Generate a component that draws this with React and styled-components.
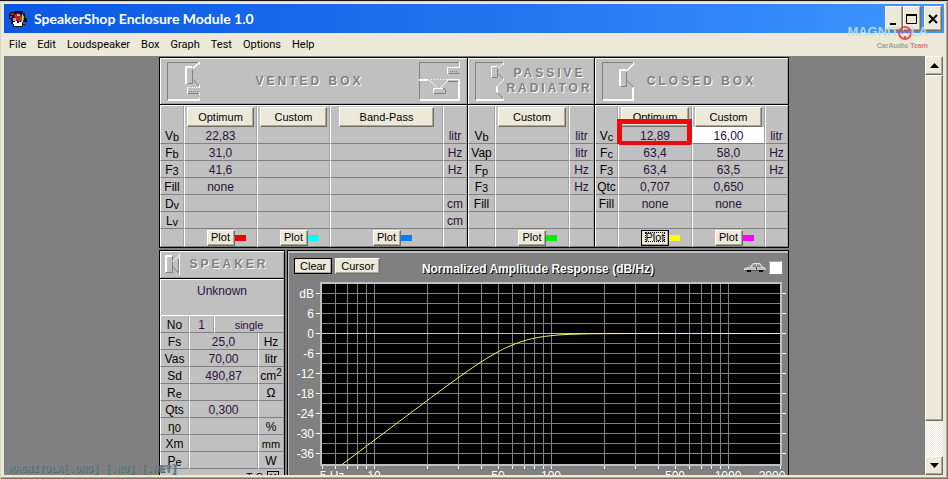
import React from "react";
import styled, { createGlobalStyle, css } from "styled-components";

const SANS = '"Liberation Sans", Arial, sans-serif';
const FACE = "#ece9d8";
const SILVER = "#c0c0c0";
const GRAY = "#808080";

const GlobalStyle = createGlobalStyle`
  *, *::before, *::after { box-sizing: border-box; }
  body { margin: 0; background: #1d1612; font: 12px/16px ${SANS}; color: #000; overflow: hidden; }
  button, input { font: inherit; color: inherit; margin: 0; padding: 0; border-radius: 0; }
`;

const raised = css`
  background: ${FACE};
  border: 1px solid;
  border-color: #fff #716f64 #716f64 #fff;
  box-shadow: inset -1px -1px 0 #aca899;
`;

/* ---------- window frame ---------- */

const Frame = styled.div`
  position: relative;
  display: flex;
  flex-direction: column;
  height: 100vh;
  padding: 3px 4px 4px;
  border-top: 1px solid #1d1612;
  background: ${FACE};
  box-shadow: inset 1px 1px 0 #d8d4c4, inset -1px -1px 0 #77735f, inset -2px -2px 0 #aca899;
`;

const TitleBar = styled.header`
  display: flex;
  align-items: center;
  flex: none;
  height: 29px;
  padding: 0 2px 0 5px;
  background: linear-gradient(90deg, #0b57e3, #2273ef 50%, #3f96ff);
`;

const TitleText = styled.h1`
  flex: 1;
  margin: 0 0 0 7px;
  font: bold 14px/20px Lato, "Open Sans", sans-serif;
  color: #fff;
`;

const WindowButton = styled.button`
  ${raised}
  display: flex;
  align-items: center;
  justify-content: center;
  width: 18px;
  height: 25px;
  margin-left: ${(p) => (p.$apart ? 3 : 0)}px;
`;

const MenuBar = styled.nav`
  display: flex;
  flex: none;
  gap: 11px;
  height: 23px;
  padding: 0 5px;
`;

const MenuItem = styled.button`
  border: 0;
  background: none;
  font: 11px/22px Roboto, "Noto Sans", sans-serif;
`;

const Body = styled.div`
  display: flex;
  flex: 1;
  min-height: 0;
  padding-right: 1px;
`;

const Workspace = styled.main`
  flex: 1;
  min-width: 0;
  overflow: hidden;
  padding: 1px 136px 0 155px;
  background: ${GRAY};
`;

/* ---------- scroll bar ---------- */

const Scroll = styled.div`
  display: flex;
  flex-direction: column;
  width: 18px;
  background: repeating-conic-gradient(#fff 0 25%, ${FACE} 0 50%) 0 0 / 2px 2px;
`;

const ScrollButton = styled.button`
  ${raised}
  display: flex;
  align-items: center;
  justify-content: center;
  height: 19px;
`;

const Thumb = styled.div`
  ${raised}
  flex: 346;
`;

const TrackRest = styled.div`
  flex: 35;
`;

/* ---------- panels ---------- */

const BoxRow = styled.div`
  display: grid;
  grid-template-columns: minmax(0, 308fr) minmax(0, 127fr) minmax(0, 194fr);
  border: 1px solid #000;
  border-right: 0;
`;

const LowerRow = styled.div`
  display: grid;
  grid-template-columns: minmax(0, 126fr) minmax(0, 502fr);
  gap: 2px;
  margin-top: 2px;
`;

const Panel = styled.section`
  background: ${SILVER};
  border: ${(p) => (p.$framed ? "1px solid #000" : "0")};
  border-right: 1px solid #000;
`;

const PanelHead = styled.div`
  display: flex;
  align-items: center;
  height: ${(p) => (p.$short ? 28 : 47)}px;
  padding: 0 ${(p) => p.$end ?? 7}px 0 ${(p) => (p.$short ? 5 : 7)}px;
  border-bottom: 1px solid #000;
  box-shadow: inset 1px 1px 0 #fff, inset -1px -1px 0 #a0a0a0;
  svg { flex: none; }
`;

const PanelTitle = styled.h2`
  flex: 1;
  margin: 0;
  text-align: center;
  font: bold 12px/15px ${SANS};
  letter-spacing: 3px;
  color: ${GRAY};
  text-shadow: 1px 1px 0 #fff;
`;

const Grid = styled.table`
  width: 100%;
  table-layout: fixed;
  border-collapse: separate;
  border-spacing: 0;
`;

const Cell = styled.td`
  position: relative;
  height: 17px;
  padding: 2px 0 0;
  border-left: 1px solid #fff;
  border-right: 1px solid #a4a4a4;
  border-bottom: 1px solid ${GRAY};
  font-size: ${(p) => (p.$small ? 11 : 12)}px;
  font-weight: normal;
  line-height: 14px;
  text-align: center;
  white-space: nowrap;
  color: ${(p) => (p.$value ? "#2a1238" : "#000")};
  sub, sup { font-size: 11px; line-height: 0; }
  sub { vertical-align: -1px; }
  sup { font-size: 10px; vertical-align: 4px; }
`;

const TopCell = styled(Cell)`
  height: 22px;
  padding: 1px 2px 0 2px;
  border-top: 1px solid #fff;
  border-bottom: 0;
`;

const FieldCell = styled(Cell)`
  padding: 0;
`;

const PlotCell = styled(Cell)`
  height: 18px;
  padding: 0;
`;

const ModeButton = styled.button`
  ${raised}
  display: block;
  width: ${(p) => (p.$wide ? "88%" : "100%")};
  height: 20px;
  margin: 0 auto;
  font-size: 11px;
  line-height: 16px;
`;

const PlotLine = styled.div`
  display: grid;
  grid-template-columns: 1fr 28px 1fr;
  align-items: center;
`;

const PlotButton = styled.button`
  ${raised}
  grid-column: 2;
  height: 16px;
  font-size: 11px;
  line-height: 13px;
  ${(p) => p.$focused && css`
    border-color: #000;
    span { outline: 1px dotted #000; outline-offset: -2px; padding: 0 2px; }
  `}
`;

const Swatch = styled.i`
  width: 11px;
  height: 6px;
  margin-top: 1px;
  background: ${(p) => p.$color};
`;

const ValueInput = styled.input`
  display: block;
  width: 100%;
  height: 16px;
  padding-top: 2px;
  border: 0;
  background: #fff;
  text-align: center;
`;

const RedMark = styled.span`
  position: absolute;
  inset: -8px -1px -2px -2px;
  border: 5px solid #ee0a0c;
  border-bottom-width: 4px;
  pointer-events: none;
`;

const SpeakerName = styled.p`
  height: 37px;
  margin: 0;
  padding: 3px 0;
  border: 1px solid;
  border-color: #fff #a4a4a4 #fff #fff;
  text-align: center;
  color: #2a1238;
`;

const ModelRow = styled.label`
  display: flex;
  align-items: center;
  justify-content: flex-end;
  gap: 4px;
  height: 16px;
  padding-right: 5px;
  font-size: 11px;
`;

const ModelButton = styled.button`
  width: 12px;
  height: 12px;
  border: 1px solid #000;
  background: ${SILVER};
  font: bold 9px/9px ${SANS};
`;

/* ---------- graph ---------- */

const GraphPanel = styled.section`
  border: 1px solid #000;
  background: ${GRAY};
  box-shadow: inset 1px 2px 0 ${SILVER};
`;

const GraphHead = styled.div`
  display: grid;
  grid-template-columns: 1fr auto 1fr;
  align-items: start;
  padding: 7px 6px 1px;
`;

const GraphTools = styled.div`
  display: flex;
  gap: 3px;
  justify-content: ${(p) => (p.$end ? "flex-end" : "flex-start")};
  align-self: ${(p) => (p.$end ? "center" : "start")};
  align-items: center;
`;

const ToolButton = styled.button`
  ${raised}
  height: 16px;
  padding: 0 5px;
  font-size: 11px;
  line-height: 13px;
  ${(p) => p.$default && css`border-color: #000;`}
`;

const GraphTitle = styled.h2`
  margin: 0;
  padding-top: 3px;
  font: bold 12px/16px ${SANS};
  color: #fff;
  text-shadow: 1px 1px 0 #000;
`;

const CabinCheck = styled.input`
  appearance: none;
  width: 13px;
  height: 13px;
  border: 1px solid;
  border-color: #aca899 #fff #fff #aca899;
  background: #fff;
`;

const Chart = styled.svg`
  display: block;
  width: 100%;
  font: 12px ${SANS};
`;

/* ---------- watermarks ---------- */

const SiteMark = styled.div`
  position: absolute;
  left: 9px;
  bottom: 2px;
  font: bold 10px/14px "Liberation Mono", monospace;
  color: #72878e;
  text-shadow: 1px 1px 0 #59666b;
  pointer-events: none;
`;

const LogoMark = styled.div`
  position: absolute;
  top: 20px;
  right: 20px;
  text-align: right;
  pointer-events: none;
`;

const LogoWord = styled.div`
  display: flex;
  align-items: center;
  height: 21px;
  font: bold 13px/21px ${SANS};
  color: rgba(190, 224, 222, 0.9);
  svg { margin: 4px -2px 0 -2px; }
`;

const LogoTeam = styled.div`
  font: bold 7px/8px ${SANS};
  color: #a09f98;
  b { color: #e8737a; }
`;

/* ---------- drawings ---------- */

const Strokes = ({ w, h, dark, light }) => (
  <svg width={w} height={h} viewBox={`0 0 ${w} ${h}`} fill="none" aria-hidden="true">
    <path d={dark} stroke={GRAY} />
    <path d={light} stroke="#fff" />
  </svg>
);

const VentedIcon = () => (
  <Strokes
    w={33}
    h={41}
    dark="M.5 39V1.5H32M25.5 7V22.5H20M26 18.5L32 25M21 32.5H32M22 30.5H23M24 30.5H25M26 30.5H27M28 30.5H29M30 30.5H31"
    light="M1 39.5H32.5V37M1 38.5H32.5M19.5 23V6.5H26M18.5 23V5.5H25M25.5 8.5L32.5 1.5M26 7L32 1M32.5 1V4M20.5 33V26.5H22M23 26.5H24M25 26.5H26M27 26.5H28M29 26.5H30M31 26.5H32M32.5 24V27M32.5 32V34"
  />
);

const BandPassIcon = () => (
  <Strokes
    w={41}
    h={41}
    dark="M.5 38V1.5H40M10.5 19.5L18.5 27.5M29 20.5H40M15 32.5H26.5V28M20 27.5H26M30 12.5H40M31 10.5H32M33 10.5H34M35 10.5H36M37 10.5H38"
    light="M0 18.5H9.5L18.5 27M0 19.5H9M29.5 18.5L21.5 27M28.5 18.5H40.5V39.5H1M39.5 20V38.5H1M14.5 32V27.5H24M40 6.5H28.5V13M40.5 1V7M12 18.5H13M15 18.5H16M18 18.5H19M21 18.5H22M24 18.5H25M27 18.5H28"
  />
);

const PassiveIcon = () => (
  <Strokes
    w={30}
    h={41}
    dark="M.5 39V1.5H28M22.5 5V16.5H17M23 12.5L28.5 18M22.5 25V32L28.5 38"
    light="M1 39.5H28.5V37M1 38.5H28.5M16.5 16V5.5H23M22.5 8L28.5 2M28.5 1V4M28.5 17V19L22.5 25V32M21.5 25.5V31M28.5 37V39"
  />
);

const ClosedIcon = () => (
  <Strokes
    w={33}
    h={41}
    dark="M.5 39V1.5H31M24.5 10V25.5H19M25 19.5L31.5 26"
    light="M1 39.5H31.5V26M1 38.5H31.5M30.5 27V39M18.5 25V9.5H25M17.5 25V8.5H24M24.5 10.5L31.5 3.5M24.5 9.5L30.5 3.5M31.5 1V5"
  />
);

const SpeakerIcon = () => (
  <Strokes
    w={16}
    h={22}
    dark="M7.5 2V18.5H1M8 13L14.5 20M13.5 5V18"
    light="M.5 18V1.5H7M1.5 18V2.5H7M7.5 8L14.5 1M14.5 0V21"
  />
);

const AppIcon = () => (
  <svg width="18" height="18" viewBox="0 0 18 18" aria-hidden="true">
    <path d="M1 2h5V1h8v2h2v5h2v4h-2v3h-2v2H4v-3H2V9H0V4h1z" fill="#10101c" />
    <path d="M2 3h3v2H2zM5 5l4-2 3 2 1 5-3 2-4-3z" fill="#c3202c" />
    <path d="M8 4h3v2H8zM4 8h3v3H4z" fill="#e88fa0" />
    <path d="M13 3l2 4-1 5-2 1 1-5z" fill="#e0d030" />
    <path d="M12 5l1 4-2 2z" fill="#2c9e44" />
    <path d="M4 12h2v-1h2v2h2v-1h3v4H5v-2H4z" fill="#fff" />
    <path d="M1 6h2v2H1zM14 12h2v2h-2z" fill="#3454c8" />
  </svg>
);

const CarIcon = () => (
  <svg width="22" height="11" viewBox="0 0 22 11" aria-hidden="true">
    <path d="M.5 8V6.500L6 5l3-3.500h7L18 5l3 1v2.500z" fill={SILVER} stroke="#e0e0e0" />
    <path d="M8 5l2-2.500h2V5zM13 2.500h2L17 5h-4z" fill={GRAY} />
    <path d="M12.500 5v3M1 8.500h20" stroke="#505050" />
    <path d="M3 8h4v2H3zM15 8h4v2h-4z" />
  </svg>
);

const HeadphoneRing = () => (
  <svg width="16" height="18" viewBox="0 0 16 18" aria-hidden="true">
    <circle cx="8" cy="8" r="6" fill="none" stroke="#e8505a" strokeWidth="2" />
    <path d="M5 9a3 3 0 1 1 6 0" fill="none" stroke="#e8505a" />
    <path d="M7 11h2v4H7z" fill="#e8505a" />
  </svg>
);

/* ---------- data ---------- */

const F3 = <>F<sub>3</sub></>;

const VENTED = {
  widths: [24, 73, 73, 113, 24],
  modes: ["Optimum", "Custom", "Band-Pass"],
  colors: ["#f00000", "#00ffff", "#0080ff"],
  rows: [
    [<>V<sub>b</sub></>, "22,83", "", "", "litr"],
    [<>F<sub>b</sub></>, "31,0", "", "", "Hz"],
    [F3, "41,6", "", "", "Hz"],
    ["Fill", "none", "", "", ""],
    [<>D<sub>v</sub></>, "", "", "", "cm"],
    [<>L<sub>v</sub></>, "", "", "", "cm"],
  ],
};

const PASSIVE = {
  widths: [27, 74, 25],
  modes: ["Custom"],
  colors: ["#00f000"],
  rows: [
    [<>V<sub>b</sub></>, "", "litr"],
    ["Vap", "", "litr"],
    [<>F<sub>p</sub></>, "", "Hz"],
    [F3, "", "Hz"],
    ["Fill", "", ""],
    ["", "", ""],
  ],
};

const CLOSED = {
  widths: [23, 74, 73, 23],
  modes: ["Optimum", "Custom"],
  colors: ["#ffff00", "#ff00ff"],
  focused: 0,
  marked: 1,
  editable: 2,
  rows: [
    [<>V<sub>c</sub></>, "12,89", "16,00", "litr"],
    [<>F<sub>c</sub></>, "63,4", "58,0", "Hz"],
    [F3, "63,4", "63,5", "Hz"],
    ["Qtc", "0,707", "0,650", ""],
    ["Fill", "none", "none", ""],
    ["", "", "", ""],
  ],
};

const SPEAKER = [
  ["Fs", "25,0", "Hz"],
  ["Vas", "70,00", "litr"],
  ["Sd", "490,87", <>cm<sup>2</sup></>],
  [<>R<sub>e</sub></>, "", "Ω"],
  ["Qts", "0,300", ""],
  [<>η<sub>0</sub></>, "", "%"],
  ["Xm", "", "mm"],
  [<>P<sub>e</sub></>, "", "W"],
];

const Columns = ({ widths }) => {
  const total = widths.reduce((a, b) => a + b, 0);
  return (
    <colgroup>
      {widths.map((w, i) => <col key={i} style={{ width: `${(w / total) * 100}%` }} />)}
    </colgroup>
  );
};

const BoxTable = ({ widths, modes, colors, rows, focused, marked, editable }) => (
  <Grid>
    <Columns widths={widths} />
    <thead>
      <tr>
        <TopCell />
        {modes.map((m) => (
          <TopCell as="th" scope="col" key={m}>
            <ModeButton type="button" $wide={m === "Band-Pass"}>{m}</ModeButton>
          </TopCell>
        ))}
        <TopCell />
      </tr>
    </thead>
    <tbody>
      {rows.map((row, r) => (
        <tr key={r}>
          {row.map((v, c) => {
            if (c === 0) return <Cell as="th" scope="row" key={c}>{v}</Cell>;
            if (r === 0 && c === editable)
              return <FieldCell $value key={c}><ValueInput aria-label="Custom Vc" defaultValue={v} /></FieldCell>;
            return (
              <Cell $value key={c}>
                {v}
                {r === 0 && c === marked && <RedMark />}
              </Cell>
            );
          })}
        </tr>
      ))}
      <tr>
        <PlotCell />
        {modes.map((m, i) => (
          <PlotCell key={m}>
            <PlotLine>
              <PlotButton type="button" $focused={i === focused}><span>Plot</span></PlotButton>
              <Swatch $color={colors[i]} />
            </PlotLine>
          </PlotCell>
        ))}
        <PlotCell />
      </tr>
    </tbody>
  </Grid>
);

/* ---------- amplitude response ---------- */

const PLOT = { left: 33, top: 6, right: 493, bottom: 187, zero: 55 };
const xOf = (f) => 86 + Math.log10(f / 10) * 177;
const yOf = (db) => PLOT.zero - (db * 10) / 3;
const snap = (v) => Math.round(v) + 0.5;

const FREQS = [];
[1, 10, 100, 1000].forEach((d) => {
  for (let k = 1; k < 10; k += 1) if (k * d > 5 && k * d < 2000) FREQS.push(k * d);
});
const LEVELS = Array.from({ length: 17 }, (_, i) => 12 - 3 * i);

const CURVE = Array.from({ length: 230 }, (_, i) => {
  const f = 6.6 * 10 ** (i * 0.0112);
  return [xOf(f), yOf(-10 * Math.log10(1 + (63.4 / f) ** 4)) + 0.5];
})
  .filter(([x, y]) => x < PLOT.right && y < PLOT.bottom)
  .map(([x, y]) => `${x.toFixed(1)},${y.toFixed(1)}`)
  .join(" ");

const AXIS = [[5.8, "5 Hz"], [10, "10"], [50, "50"], [100, "100"], [500, "500"], [1000, "1000"], [1780, "2000"]];

const ResponseChart = () => (
  <Chart viewBox="0 0 500 206" role="img" aria-label="Amplitude response in dB against frequency">
    <rect x={PLOT.left - 1} y={PLOT.top - 2} width={PLOT.right - PLOT.left + 2} height={PLOT.bottom - PLOT.top + 3} fill={SILVER} />
    <rect x={PLOT.left + 1} y={PLOT.top} width={PLOT.right - PLOT.left - 2} height={PLOT.bottom - PLOT.top - 1} fill="#000" />
    {FREQS.map((f) => (
      <g key={f}>
        <path d={`M${snap(xOf(f))} ${PLOT.top}V${PLOT.bottom - 1}`} stroke={GRAY} />
        <path d={`M${snap(xOf(f))} ${PLOT.bottom + 1}v3`} stroke="#fff" />
      </g>
    ))}
    <path d={`M34.500 ${PLOT.bottom + 1}v3M492.500 ${PLOT.bottom + 1}v3`} stroke="#fff" />
    {LEVELS.map((db, i) => (
      <g key={db}>
        <path d={`M34 ${snap(yOf(db))}H492`} stroke={db === 0 ? SILVER : GRAY} />
        {i % 2 === 0 && (
          <>
            <path d={`M28 ${snap(yOf(db))}h4M494 ${snap(yOf(db))}h4`} stroke="#fff" />
            <text x="26" y={yOf(db) + 5} textAnchor="end" fill="#fff">{db === 12 ? "dB" : db}</text>
          </>
        )}
      </g>
    ))}
    <polyline points={CURVE} fill="none" stroke="#ffff60" />
    {AXIS.map(([f, t]) => (
      <text key={t} x={Math.round(xOf(f))} y="202" textAnchor="middle" fill="#fff">{t}</text>
    ))}
  </Chart>
);

/* ---------- application ---------- */

const MENU = ["File", "Edit", "Loudspeaker", "Box", "Graph", "Test", "Options", "Help"];

export default function App() {
  return (
    <>
      <GlobalStyle />
      <Frame>
        <TitleBar>
          <AppIcon />
          <TitleText>SpeakerShop Enclosure Module 1.0</TitleText>
          <WindowButton type="button" aria-label="Minimize">
            <svg width="12" height="12"><path d="M2 11h6" stroke="#000" strokeWidth="2" /></svg>
          </WindowButton>
          <WindowButton type="button" aria-label="Maximize">
            <svg width="12" height="12" fill="none" stroke="#000"><path d="M.5 1.500h10v9H.5z" /><path d="M0 2h11" strokeWidth="2" /></svg>
          </WindowButton>
          <WindowButton type="button" aria-label="Close" $apart>
            <svg width="10" height="10"><path d="M1 1l8 8M9 1l-8 8" stroke="#000" strokeWidth="2" /></svg>
          </WindowButton>
        </TitleBar>
        <MenuBar>
          {MENU.map((m) => <MenuItem type="button" key={m}>{m}</MenuItem>)}
        </MenuBar>
        <Body>
          <Workspace>
            <BoxRow>
              <Panel>
                <PanelHead>
                  <VentedIcon />
                  <PanelTitle>VENTED BOX</PanelTitle>
                  <BandPassIcon />
                </PanelHead>
                <BoxTable {...VENTED} />
              </Panel>
              <Panel>
                <PanelHead $end={0}>
                  <PassiveIcon />
                  <PanelTitle>PASSIVE RADIATOR</PanelTitle>
                </PanelHead>
                <BoxTable {...PASSIVE} />
              </Panel>
              <Panel>
                <PanelHead $end={20}>
                  <ClosedIcon />
                  <PanelTitle>CLOSED BOX</PanelTitle>
                </PanelHead>
                <BoxTable {...CLOSED} />
              </Panel>
            </BoxRow>
            <LowerRow>
              <Panel $framed>
                <PanelHead $short>
                  <SpeakerIcon />
                  <PanelTitle>SPEAKER</PanelTitle>
                </PanelHead>
                <SpeakerName>Unknown</SpeakerName>
                <Grid>
                  <Columns widths={[29, 25, 44, 26]} />
                  <tbody>
                    <tr>
                      <Cell as="th" scope="row">No</Cell>
                      <Cell $value>1</Cell>
                      <Cell $value $small colSpan={2}>single</Cell>
                    </tr>
                    {SPEAKER.map(([label, value, unit], i) => (
                      <tr key={i}>
                        <Cell as="th" scope="row">{label}</Cell>
                        <Cell $value colSpan={2}>{value}</Cell>
                        <Cell $small={unit === "mm"}>{unit}</Cell>
                      </tr>
                    ))}
                  </tbody>
                </Grid>
                <ModelRow>T-S <ModelButton type="button">M</ModelButton></ModelRow>
              </Panel>
              <GraphPanel>
                <GraphHead>
                  <GraphTools>
                    <ToolButton type="button" $default>Clear</ToolButton>
                    <ToolButton type="button">Cursor</ToolButton>
                  </GraphTools>
                  <GraphTitle>Normalized Amplitude Response (dB/Hz)</GraphTitle>
                  <GraphTools $end>
                    <CarIcon />
                    <CabinCheck type="checkbox" aria-label="In-car response" />
                  </GraphTools>
                </GraphHead>
                <ResponseChart />
              </GraphPanel>
            </LowerRow>
          </Workspace>
          <Scroll>
            <ScrollButton type="button" aria-label="Scroll up">
              <svg width="9" height="5"><path d="M0 5L4.500 0L9 5z" /></svg>
            </ScrollButton>
            <Thumb />
            <TrackRest />
            <ScrollButton type="button" aria-label="Scroll down">
              <svg width="9" height="5"><path d="M0 0L4.500 5L9 0z" /></svg>
            </ScrollButton>
          </Scroll>
        </Body>
        <SiteMark>MAGNITOLA[.ORG] [.RU] [.NET]</SiteMark>
        <LogoMark>
          <LogoWord>MAGNIT<HeadphoneRing />LA</LogoWord>
          <LogoTeam>CarAudio <b>Team</b></LogoTeam>
        </LogoMark>
      </Frame>
    </>
  );
}
